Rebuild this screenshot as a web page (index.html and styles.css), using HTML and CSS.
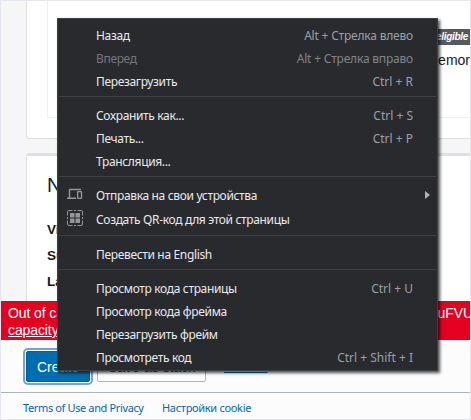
FILE: index.html
```
<!DOCTYPE html>
<html lang="ru">
<head>
<meta charset="utf-8">
<title>Create</title>
<link rel="stylesheet" href="styles.css">
</head>
<body>
<div class="page">
  <main class="content">
    <section class="card first">
      <div class="inner">
        <div class="tag-row"><span class="tag">eligible</span></div>
        <div class="memory">emor</div>
      </div>
    </section>
    <section class="card second">
      <h2>N</h2>
      <div class="label">Vi</div>
      <div class="label">Su</div>
      <div class="label">La</div>
    </section>
  </main>
  <div class="error">
    <div class="line"><span>Out of ca</span><span class="tail">uFVU</span></div>
    <div class="line"><u>capacity</u></div>
  </div>
  <div class="actions">
    <button class="btn primary">Create</button>
    <button class="btn">Save as stack</button>
    <a class="cancel">Cancel</a>
  </div>
  <footer class="footer"><a class="terms">Terms of Use and Privacy</a><a class="cookie">Настройки cookie</a></footer>
</div>

<div class="menu">
  <div class="item"><span class="name">Назад</span><span class="key arrow-key">Alt + Стрелка влево</span></div>
  <div class="item off"><span class="name">Вперед</span><span class="key arrow-key">Alt + Стрелка вправо</span></div>
  <div class="item"><span class="name">Перезагрузить</span><span class="key">Ctrl + R</span></div>
  <div class="sep"></div>
  <div class="item"><span class="name">Сохранить как...</span><span class="key">Ctrl + S</span></div>
  <div class="item"><span class="name">Печать...</span><span class="key">Ctrl + P</span></div>
  <div class="item"><span class="name">Трансляция...</span></div>
  <div class="sep short"></div>
  <div class="item tall">
    <svg class="icon" width="16" height="16" viewBox="0 0 16 16"><path d="M2.500 10.500v-7.500q0-.5.5-.5h11M0 11.300h9" fill="none" stroke="#94979b" stroke-width="1.400"/><rect x="10.600" y="4.600" width="3.900" height="6.800" rx=".5" fill="none" stroke="#94979b" stroke-width="1.300"/></svg>
    <span class="name">Отправка на свои устройства</span><span class="arrow"></span>
  </div>
  <div class="item tall">
    <svg class="icon qr" width="16" height="16" viewBox="0 0 16 16"><path d="M.5 5.500v-3.500q0-1.500 1.500-1.500h3.500M7 .5h2M10.500 .5h3.500q1.500 0 1.500 1.500v3.500M15.500 7v2M15.500 10.500v3.500q0 1.500-1.500 1.500h-3.500M9 15.500h-2M5.500 15.500h-3.500q-1.500 0-1.500-1.500v-3.500M.5 9v-2" fill="none" stroke="#94979b"/><path d="M3 3h4.500v4.500h-4.500zM8.500 3h4.500v4.500h-4.500zM3 8.500h4.500v4.500h-4.500zM8.500 8.500h4.500v4.500h-4.500z" fill="#94979b"/></svg>
    <span class="name">Создать QR-код для этой страницы</span>
  </div>
  <div class="sep long"></div>
  <div class="item"><span class="name">Перевести на English</span></div>
  <div class="sep"></div>
  <div class="item"><span class="name">Просмотр кода страницы</span><span class="key">Ctrl + U</span></div>
  <div class="item"><span class="name">Просмотр кода фрейма</span></div>
  <div class="item"><span class="name">Перезагрузить фрейм</span></div>
  <div class="item"><span class="name">Просмотреть код</span><span class="key">Ctrl + Shift + I</span></div>
</div>
</body>
</html>
```
FILE: styles.css
```
* { box-sizing: border-box; }
body { margin: 0; width: 471px; height: 420px; overflow: hidden; font-family: "Liberation Sans", Arial, sans-serif; }
.page { width: 471px; height: 420px; border: 1px solid #e4e7f1; display: flex; flex-direction: column; background: #fcfcfc; overflow: hidden; }
.content { height: 300px; padding-left: 25px; background: #f6f6f6; }
.card { border-left: 1px solid #dddfe4; background: #fff; }
.first { height: 138px; border-bottom: 1px solid #dddfe4; border-bottom-left-radius: 3px; padding-left: 20px; }
.inner { height: 117px; border-left: 1px solid #f0f0f0; border-bottom: 1px solid #f0f0f0; padding-top: 28px; text-align: right; }
.tag-row { height: 16px; display: flex; justify-content: flex-end; }
.tag { width: 60px; height: 16px; padding-right: 2px; background: #555a5e; color: #fff; font: italic bold 10px/16px "Liberation Sans", sans-serif; letter-spacing: -.3px; }
.memory { font-size: 14px; line-height: 18px; margin-top: 6px; color: #16191f; }
.second { height: 148px; margin-top: 14px; border-top: 3px solid #dfe0e7; border-top-left-radius: 3px; padding: 18px 0 0 20px; color: #16191f; }
h2 { margin: 0 0 19px; font-size: 20px; line-height: 22px; padding-bottom: 2px; font-weight: 400; }
.label { height: 26px; font-size: 13.5px; line-height: 26px; font-weight: 700; }
.error { height: 39px; padding: 4px 0 0 7px; background: #e60020; color: #fff; font-size: 14px; line-height: 17px; letter-spacing: -.1px; }
.line { display: flex; justify-content: space-between; }
.tail { margin-right: -3px; }
.actions { height: 52px; padding: 11px 0 0 25px; display: flex; align-items: flex-start; }
.btn { width: 109px; height: 31px; margin: 0 18px 0 0; padding: 1px 0 0; border: 1px solid #aab7b8; border-radius: 2px; background: #fff; font: 14px/28px "Liberation Sans", sans-serif; color: #444; }
.primary { width: 64px; margin-right: 7px; border-color: #0060a0; background: #006dae; color: #fff; box-shadow: 0 0 0 1px #fff, 0 0 0 3px #70a3e0; }
.cancel { font-size: 14px; line-height: 30px; color: #0066af; text-decoration: underline; }
.footer { height: 27px; border-top: 1px solid #adb5ba; padding: 6px 0 0 22px; display: flex; font: 11px/18px "Noto Sans", sans-serif; color: #0066bd; }
.terms { width: 139px; letter-spacing: -.37px; }
.cookie { letter-spacing: -.3px; }
.menu { position: absolute; left: 57px; top: 18px; width: 381px; height: 353px; padding-top: 5px; border: 1px solid #3d4044; background: #292a2d; box-shadow: 2px 2px 3px rgba(0,0,0,.7); color: #e8eaed; font: 12px/23px "Noto Sans", "Open Sans", sans-serif; letter-spacing: -.34px; }
.item { height: 23px; display: flex; align-items: center; position: relative; padding: 0 24px 1px 38px; white-space: nowrap; }
.tall { height: 24px; padding-bottom: 0; }
.key { margin-left: auto; color: #9aa0a6; letter-spacing: 0; }
.arrow-key { letter-spacing: -.2px; }
.off .name { color: #74787d; }
.off .key { color: #80858a; }
.sep { height: 1px; margin: 3px 1px 7px; background: #3e4144; }
.short { margin-bottom: 6px; }
.long { margin-top: 4px; }
.icon { position: absolute; left: 9px; top: 4px; }
.qr { top: 3px; }
.arrow { margin: 0 -17px 0 auto; border: 4px solid transparent; border-left: 5px solid #b0b2b5; border-right: 0; }
```
